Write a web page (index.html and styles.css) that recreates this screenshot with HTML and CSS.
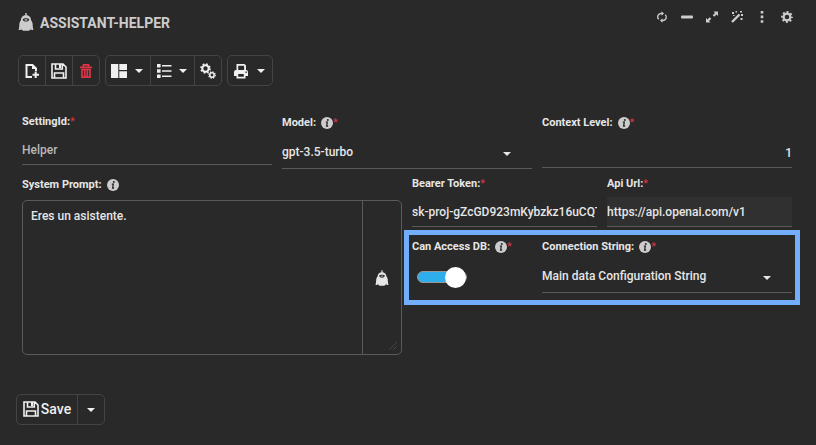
FILE: index.html
```
<!DOCTYPE html>
<html lang="en">
<head>
<meta charset="utf-8">
<meta name="viewport" content="width=device-width, initial-scale=1">
<title>Assistant-Helper</title>
<link rel="stylesheet" href="styles.css">
</head>
<body>
<svg class="sprite" aria-hidden="true">
  <symbol id="robot" viewBox="0 0 16 18"><path fill="currentColor" d="M7.300 0h1.400v3H7.300z"/><path fill="currentColor" fill-rule="evenodd" d="M8 2.300c3 0 5 2 5 4.700 1.100 1.500 1.700 3 1.700 4.700 0 3.300-2.200 5.100-4 6.100H5.300c-1.800-1-4-2.800-4-6.100C1.300 10 1.900 8.500 3 7c0-2.700 2-4.700 5-4.700zM4.700 6.400C5 7.800 6.300 8.600 8 8.600s3-.8 3.300-2.200C10.500 4.900 5.500 4.900 4.700 6.400z"/><path fill="currentColor" d="M6.600 6.300h2.800v1.100H6.600zM1.500 12.500h1.300V17H.6zM14.500 12.500h-1.300V17h2.200z"/></symbol>
  <symbol id="disk" viewBox="0 0 16 16"><path fill="none" stroke="currentColor" stroke-width="1.600" d="M1 1h11l3 3v11H1zM4.500 1v5h6.800V1M3.500 15v-5h9v5"/><path fill="currentColor" d="M8 1h2v4H8z"/></symbol>
  <symbol id="caret" viewBox="0 0 8 4"><path fill="currentColor" d="M0 0h8L4 4z"/></symbol>
  <symbol id="info" viewBox="0 0 12 12"><circle cx="6" cy="6" r="6" fill="#ccc"/><circle cx="6.800" cy="3" r="1" fill="#292929"/><path fill="none" stroke="#292929" stroke-width="1.300" d="M4.800 5.200h1.500L5.600 9h1.500"/></symbol>
</svg>
<main class="page">
  <header class="header">
    <h1 class="title"><svg class="robot"><use href="#robot"/></svg>Assistant-Helper</h1>
    <nav class="tools" aria-label="Window">
      <button class="tool" type="button" aria-label="Refresh"><svg viewBox="0 0 10 12"><path fill="none" stroke="currentColor" stroke-width="1.400" d="M5 2.500H4A3.300 3.300 0 0 0 1.800 8.300M5 9.500h1a3.300 3.300 0 0 0 2.200-5.800"/><path fill="currentColor" d="M4.500.3v4.400L7 2.500zM5.500 7.300v4.400L3 9.500z"/></svg></button>
      <button class="tool" type="button" aria-label="Minimize"><svg viewBox="0 0 12 12"><rect y="4.500" width="12" height="3" rx="1" fill="currentColor"/></svg></button>
      <button class="tool" type="button" aria-label="Expand"><svg viewBox="0 0 12 12"><path fill="currentColor" d="M7.500.5H12V5L10.500 3.600 8.300 5.800 6.700 4.200 9 1.900zM0 7l1.500 1.400L3.700 6.200l1.600 1.600L3 10.100l1.500 1.400H0z"/></svg></button>
      <button class="tool" type="button" aria-label="Magic"><svg viewBox="0 0 12 12"><path stroke="currentColor" stroke-width="2.400" d="M1 11l7.500-7.500"/><path fill="currentColor" d="M1 1h2v2H1zM4.500 0H6v1.500H4.500zM9 0h2v1.500H9zM10 3h2v2h-2zM9.500 7h2v2h-2zM2 4h1.500v1H2z"/></svg></button>
      <button class="tool" type="button" aria-label="More"><svg viewBox="0 0 12 12"><path fill="currentColor" d="M4.700 0h2.600v2.600H4.700zM4.700 4.600h2.600v2.600H4.700zM4.700 9.200h2.600v2.600H4.700z"/></svg></button>
      <button class="tool" type="button" aria-label="Settings"><svg viewBox="0 0 12 12"><circle cx="6" cy="6" r="3.400" fill="none" stroke="currentColor" stroke-width="2.200"/><circle cx="6" cy="6" r="5" fill="none" stroke="currentColor" stroke-width="1.800" stroke-dasharray="1.960 1.960" stroke-dashoffset="1"/></svg></button>
    </nav>
  </header>

  <div class="toolbar" role="toolbar" aria-label="Record">
    <div class="group">
      <button class="btn" type="button" aria-label="New"><svg class="icon" viewBox="0 0 16 16"><path fill="none" stroke="currentColor" stroke-width="2" d="M8 14H2.500V2h6L12 5.500V8"/><path fill="currentColor" d="M8 1l5 5H8zM10.700 8.500h2v2.300H15v2h-2.300V15h-2v-2.200H8.500v-2h2.200z"/></svg></button>
      <button class="btn" type="button" aria-label="Save record"><svg class="icon"><use href="#disk"/></svg></button>
      <button class="btn danger" type="button" aria-label="Delete"><svg class="icon" viewBox="0 0 16 16"><path fill="none" stroke="currentColor" stroke-width="1.700" d="M2 4.300h12M5.500 4V1.800h5V4M4 6.500v7.700h8V6.500zM6.700 7v7M9.300 7v7"/></svg></button>
    </div>
    <div class="group">
      <button class="btn split" type="button" aria-label="Layout"><svg class="icon" viewBox="0 0 16 16"><path fill="currentColor" d="M0 1h7.300v14H0zM8.300 1H16v6H8.300zM8.300 8.200H16V15H8.300z"/></svg><svg class="caret"><use href="#caret"/></svg></button>
      <button class="btn split" type="button" aria-label="List"><svg class="icon" viewBox="0 0 16 16"><path fill="currentColor" d="M1 1h3.600v3.600H1zM1 6.200h3.600v3.600H1zM1 11.400h3.600V15H1zM6 2h9.500v1.600H6zM6 7.200h9.500v1.600H6zM6 12.400h9.500V14H6z"/></svg><svg class="caret"><use href="#caret"/></svg></button>
      <button class="btn" type="button" aria-label="Options"><svg class="icon" viewBox="0 0 16 16"><g fill="none" stroke="currentColor"><circle cx="5.500" cy="5.500" r="3.200" stroke-width="2"/><circle cx="5.500" cy="5.500" r="4.500" stroke-width="1.600" stroke-dasharray="1.770 1.770"/><circle cx="12" cy="12" r="2.200" stroke-width="1.500"/><circle cx="12" cy="12" r="3.200" stroke-width="1.300" stroke-dasharray="1.260 1.260"/></g></svg></button>
    </div>
    <div class="group">
      <button class="btn split" type="button" aria-label="Print"><svg class="icon" viewBox="0 0 16 16"><path fill="currentColor" fill-rule="evenodd" d="M3.500 1h8L13 2.500V7a2 2 0 0 1 2 2v4h-2.500v2.500h-9V13H1V9a2 2 0 0 1 2-2h.5zm1.700 1.700V7h5.900V2.700zM5.200 11v2.800h5.600V11zM12.500 8.600V10h1.300V8.600z"/></svg><svg class="caret"><use href="#caret"/></svg></button>
    </div>
  </div>

  <form class="form">
    <div class="row thirds">
      <div class="field">
        <label class="label" for="setting">SettingId:<span class="req">*</span></label>
        <input class="control muted" id="setting" type="text" value="Helper">
      </div>
      <div class="field">
        <label class="label with-info" for="model">Model:<svg class="info"><use href="#info"/></svg><span class="req">*</span></label>
        <div class="picker"><select class="control select" id="model"><option>gpt-3.5-turbo</option></select><svg class="caret"><use href="#caret"/></svg></div>
      </div>
      <div class="field">
        <label class="label with-info" for="context">Context Level:<svg class="info"><use href="#info"/></svg><span class="req">*</span></label>
        <input class="control number" id="context" type="text" value="1">
      </div>
    </div>
    <div class="row halves">
      <div class="field">
        <label class="label with-info" for="prompt">System Prompt:<svg class="info"><use href="#info"/></svg></label>
        <div class="prompt">
          <textarea class="area" id="prompt">Eres un asistente.</textarea>
          <button class="assist" type="button" aria-label="Ask assistant"><svg class="robot small"><use href="#robot"/></svg><svg class="grip" viewBox="0 0 8 8"><path stroke="#444" d="M0 8l8-8M4 8l4-4"/></svg></button>
        </div>
      </div>
      <div class="side">
        <div class="row halves">
          <div class="field">
            <label class="label" for="token">Bearer Token:<span class="req">*</span></label>
            <input class="control" id="token" type="text" value="sk-proj-gZcGD923mKybzkz16uCQT">
          </div>
          <div class="field">
            <label class="label" for="url">Api Url:<span class="req">*</span></label>
            <input class="control filled" id="url" type="text" value="https://api.openai.com/v1">
          </div>
        </div>
        <div class="row database">
          <div class="field">
            <label class="label with-info" for="access">Can Access DB:<svg class="info"><use href="#info"/></svg><span class="req">*</span></label>
            <input class="switch" id="access" type="checkbox" role="switch" checked>
          </div>
          <div class="field">
            <label class="label with-info" for="connection">Connection String:<svg class="info"><use href="#info"/></svg><span class="req">*</span></label>
            <div class="picker"><select class="control select" id="connection"><option>Main data Configuration String</option></select><svg class="caret"><use href="#caret"/></svg></div>
          </div>
        </div>
      </div>
    </div>
  </form>

  <footer class="footer">
    <div class="group">
      <button class="btn save" type="button"><svg class="icon"><use href="#disk"/></svg>Save</button>
      <button class="btn" type="button" aria-label="More save options"><svg class="caret"><use href="#caret"/></svg></button>
    </div>
  </footer>
</main>
</body>
</html>
```
FILE: styles.css
```
* { box-sizing: border-box; }
body {
  margin: 0;
  background: #292929;
  color: #e6e6e6;
  font: 500 12px/18px Roboto, "Liberation Sans", sans-serif;
}
button, input, select, textarea { font: inherit; color: inherit; }
button { background: none; border: 0; padding: 0; }
svg { display: block; flex: none; }
.sprite { position: absolute; width: 0; height: 0; }
.page { padding: 7px 16px 20px; }

.header { display: flex; justify-content: space-between; align-items: flex-start; }
.title {
  display: flex;
  align-items: center;
  gap: 6px;
  margin: 0;
  padding-left: 2px;
  color: #ccc;
  font-size: 14px;
  font-weight: 700;
  line-height: 32px;
  text-transform: uppercase;
}
.robot { width: 16px; height: 18px; }
.title .robot { margin-bottom: 3px; }
.robot.small { width: 14px; height: 16px; }
.tools { display: flex; padding-right: 1px; color: #ccc; }
.tool { display: grid; place-items: center; width: 25px; height: 20px; }
.tool svg { width: 12px; height: 12px; }

.toolbar { display: flex; gap: 5px; margin: 16px 2px 28px; }
.group {
  display: flex;
  height: 31px;
  border: 1px solid #484343;
  border-radius: 5px;
  color: #f0f0f0;
}
.btn { display: flex; align-items: center; justify-content: center; width: 27px; }
.btn:first-child { width: 26px; }
.btn + .btn { border-left: 1px solid #484343; }
.btn.split { width: 44px; justify-content: space-between; padding: 0 7px 0 5px; }
.icon { width: 16px; height: 16px; }
.caret { width: 8px; height: 4px; }
.danger { color: #dc3545; }

.form { padding: 0 8px 0 6px; }
.row { display: grid; column-gap: 10px; }
.thirds { grid-template-columns: repeat(3, minmax(0, 1fr)); margin-bottom: 7px; }
.halves { grid-template-columns: repeat(2, minmax(0, 1fr)); }
.field { display: flex; flex-direction: column; gap: 6px; min-width: 0; }
.label { display: flex; align-items: center; height: 15px; font-size: 11px; font-weight: 700; }
.with-info { height: 18px; }
.info { width: 12px; height: 12px; margin-left: 5px; }
.req { color: #dc3545; font-weight: 400; }
.control {
  width: 100%;
  height: 30px;
  padding: 0;
  border: 0;
  border-bottom: 1px solid #5a5a5a;
  border-radius: 0;
  outline: 0;
  background: transparent;
}
.muted { color: #b8b8b8; }
.filled { background: #303030; }
.number { text-align: right; }
.select { height: 31px; padding-bottom: 3px; appearance: none; }
.picker { display: grid; align-items: center; }
.picker > * { grid-area: 1 / 1; }
.picker .caret { justify-self: end; margin-right: 21px; pointer-events: none; }

.prompt { display: flex; height: 155px; border: 1px solid #5a5a5a; border-radius: 5px; }
.area { flex: 1; min-width: 0; padding: 6px 8px; border: 0; outline: 0; background: none; resize: none; }
.assist {
  position: relative;
  display: grid;
  place-items: center;
  width: 39px;
  border-left: 1px solid #5a5a5a;
}
.grip { position: absolute; right: 4px; bottom: 4px; width: 8px; height: 8px; }

.side { display: flex; flex-direction: column; gap: 11px; }
.database {
  grid-template-columns: minmax(0, 12fr) minmax(0, 25fr);
  padding-bottom: 4px;
  outline: 5px solid #73aefc;
  outline-offset: 3px;
}
.switch {
  display: flex;
  align-items: center;
  justify-content: flex-end;
  width: 50px;
  height: 12px;
  margin: 9px 5px;
  border: 1px solid #999;
  border-radius: 6px;
  background: #2eaeea;
  appearance: none;
}
.switch::before {
  content: "";
  flex: none;
  width: 21px;
  height: 21px;
  border-radius: 50%;
  background: #fff;
}

.footer { margin-top: 39px; display: flex; }
.btn.save { width: 60px; gap: 2px; padding-bottom: 2px; font-size: 14px; }
```
